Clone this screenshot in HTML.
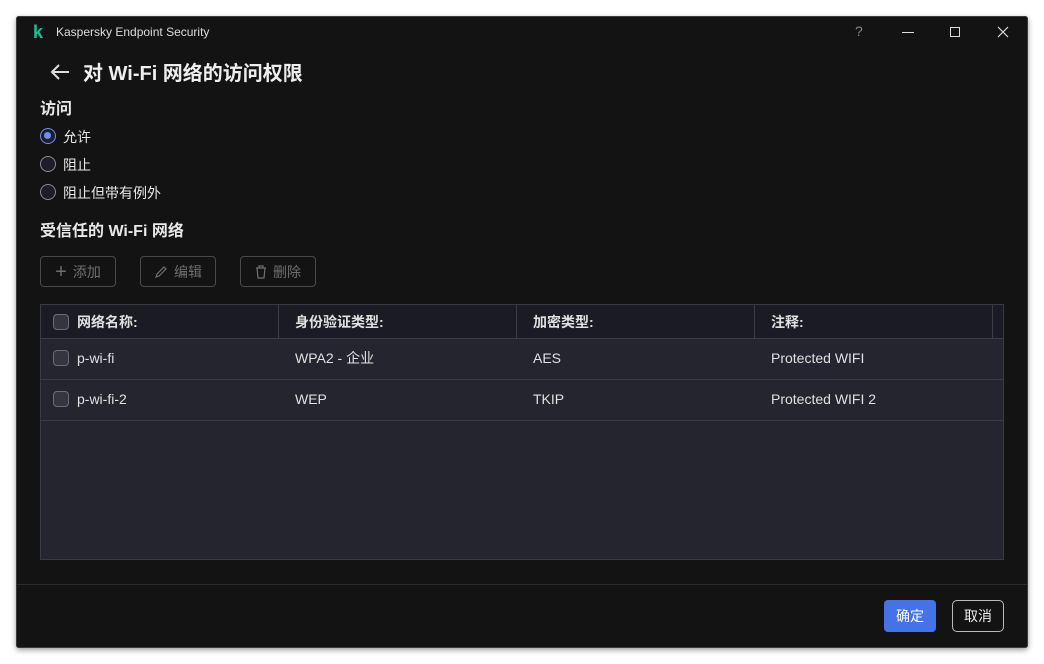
<!DOCTYPE html>
<html><head><meta charset="utf-8"><style>
*{margin:0;padding:0;box-sizing:border-box}
body{width:1044px;height:664px;background:#fff;position:relative;overflow:hidden;font-family:"Liberation Sans","Noto Sans CJK SC",sans-serif;color:#e8e8e8}
.win{position:absolute;left:16px;top:16px;width:1012px;height:632px;background:#131313;box-shadow:inset 0 0 0 1px #3a3a3a,0 2px 6px rgba(0,0,0,.4);border-radius:3px}
.a{position:absolute;white-space:nowrap;line-height:1.2}
.radio{position:absolute;width:16px;height:16px;border-radius:50%;border:1.5px solid #8a8a96;background:#1e1e28}
.btn{position:absolute;height:31px;border:1px solid #4a4a4a;border-radius:4px;color:#6e6e6e;font-size:14px;display:flex;align-items:center;justify-content:center;gap:6px}
.tbl{position:absolute;left:24px;top:288px;width:964px;height:256px;background:#25252f;border:1px solid #3a3a44}
.hd{position:absolute;left:0;top:0;width:962px;height:34px;background:#1b1b25;border-bottom:1px solid #3c3c48}
.row{position:absolute;left:0;width:962px;height:41px;border-bottom:1px solid #3c3c48}
.vl{position:absolute;top:0;width:1px;height:34px;background:#3c3c48}
.cb{position:absolute;left:12px;width:16px;height:16px;border:1.5px solid #6c6c78;border-radius:4px;background:#353540}
.t{position:absolute;font-size:14px;color:#e0e0e0;line-height:20px;white-space:nowrap}
.h{font-weight:bold}
</style></head><body>
<div class="win">
 <div class="a" style="left:17px;top:6px;color:#1fbf92;font-weight:bold;font-size:18px">k</div>
 <div class="a" style="left:40px;top:9px;font-size:12px;color:#ddd">Kaspersky Endpoint Security</div>
 <div class="a" style="left:839px;top:7px;font-size:14px;color:#888">?</div>
 <div class="a" style="left:886px;top:16px;width:12px;height:1px;background:#ddd"></div>
 <div class="a" style="left:934px;top:11px;width:10px;height:10px;border:1px solid #ddd"></div>
 <svg class="a" style="left:981px;top:10px" width="12" height="12"><path d="M1 1L11 11M11 1L1 11" stroke="#ddd" stroke-width="1.2"/></svg>
 <svg class="a" style="left:33px;top:47px" width="22" height="18"><path d="M20 9H3M10 2L3 9L10 16" stroke="#ddd" stroke-width="2" fill="none"/></svg>
 <div class="a" style="left:67px;top:44px;font-size:20px;font-weight:bold;color:#eee;line-height:28px">对 Wi-Fi 网络的访问权限</div>
 <div class="a" style="left:24px;top:83px;font-size:16px;font-weight:bold;line-height:22px">访问</div>
 <div class="radio" style="left:24px;top:112px;border-color:#6e8ef0;background:#1e1e28"><div style="position:absolute;left:3px;top:3px;width:7px;height:7px;border-radius:50%;background:#6e8ef0"></div></div>
 <div class="a" style="left:47px;top:111px;font-size:14px;line-height:20px">允许</div>
 <div class="radio" style="left:24px;top:140px"></div>
 <div class="a" style="left:47px;top:139px;font-size:14px;line-height:20px">阻止</div>
 <div class="radio" style="left:24px;top:168px"></div>
 <div class="a" style="left:47px;top:167px;font-size:14px;line-height:20px">阻止但带有例外</div>
 <div class="a" style="left:24px;top:205px;font-size:16px;font-weight:bold;line-height:22px">受信任的 Wi-Fi 网络</div>
 <div class="btn" style="left:24px;top:240px;width:76px"><span style="font-size:20px;line-height:1">+</span>添加</div>
 <div class="btn" style="left:124px;top:240px;width:76px"><svg width="14" height="14"><path d="M2 12L3 9L10 2L12 4L5 11Z" stroke="#6e6e6e" fill="none" stroke-width="1.2"/></svg>编辑</div>
 <div class="btn" style="left:224px;top:240px;width:76px"><svg width="12" height="14"><path d="M1 3H11M4 3V1H8V3M2 3L3 13H9L10 3" stroke="#6e6e6e" fill="none" stroke-width="1.2"/></svg>删除</div>
 <div class="tbl">
  <div class="hd">
   <div class="cb" style="top:9px"></div>
   <div class="t h" style="left:36px;top:7px">网络名称:</div>
   <div class="vl" style="left:237px"></div>
   <div class="t h" style="left:254px;top:7px">身份验证类型:</div>
   <div class="vl" style="left:475px"></div>
   <div class="t h" style="left:492px;top:7px">加密类型:</div>
   <div class="vl" style="left:713px"></div>
   <div class="t h" style="left:730px;top:7px">注释:</div>
   <div class="vl" style="left:951px"></div>
  </div>
  <div class="row" style="top:34px">
   <div class="cb" style="top:11px"></div>
   <div class="t" style="left:36px;top:9px">p-wi-fi</div>
   <div class="t" style="left:254px;top:9px">WPA2 - 企业</div>
   <div class="t" style="left:492px;top:9px">AES</div>
   <div class="t" style="left:730px;top:9px">Protected WIFI</div>
  </div>
  <div class="row" style="top:75px">
   <div class="cb" style="top:11px"></div>
   <div class="t" style="left:36px;top:9px">p-wi-fi-2</div>
   <div class="t" style="left:254px;top:9px">WEP</div>
   <div class="t" style="left:492px;top:9px">TKIP</div>
   <div class="t" style="left:730px;top:9px">Protected WIFI 2</div>
  </div>
 </div>
 <div class="a" style="left:1px;top:568px;width:1010px;height:1px;background:#2c2c2c"></div>
 <div class="a" style="left:868px;top:584px;width:52px;height:32px;background:#4672e8;border-radius:4px;font-size:14px;color:#fff;text-align:center;line-height:32px">确定</div>
 <div class="a" style="left:936px;top:584px;width:52px;height:32px;border:1px solid #bbb;border-radius:5px;font-size:14px;color:#eee;text-align:center;line-height:30px">取消</div>
</div>
</body></html>
